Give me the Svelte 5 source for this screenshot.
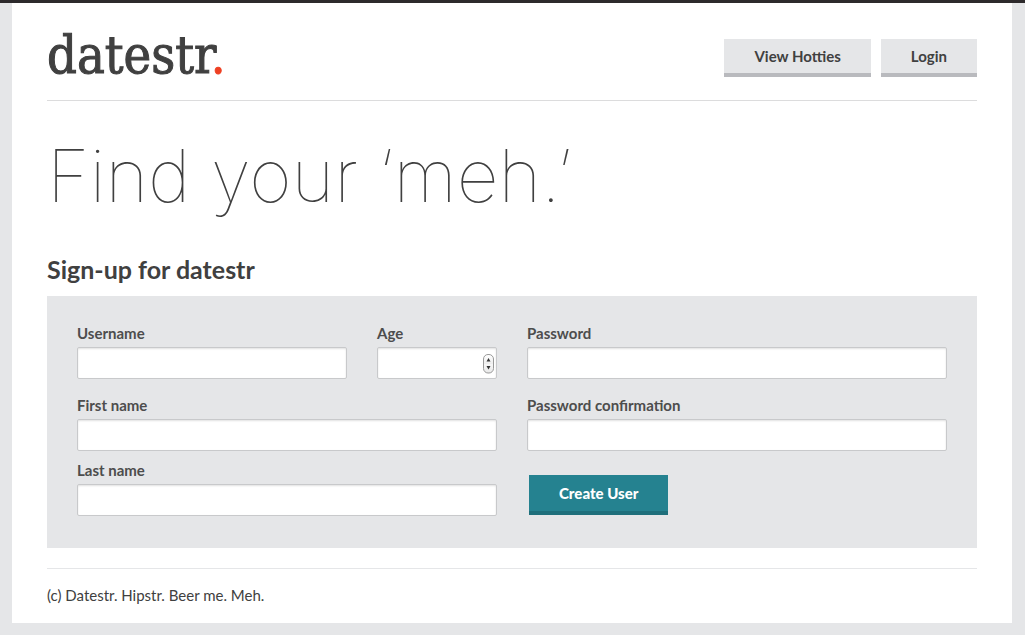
<script>
  let username = $state('');
  let age = $state(null);
  let firstName = $state('');
  let lastName = $state('');
  let password = $state('');
  let confirmation = $state('');

  function step(amount) {
    age = Math.max(0, (age ?? 0) + amount);
  }
</script>

<div class="page">
  <div class="sheet">
    <header>
      <a class="logo" href="#home">datestr<span class="dot">.</span></a>
      <nav>
        <a class="tab" href="#hotties">View Hotties</a>
        <a class="tab" href="#login">Login</a>
      </nav>
    </header>

    <main>
      <h1>Find your ‘meh.’</h1>
      <h2>Sign-up for datestr</h2>

      <form onsubmit={(event) => event.preventDefault()}>
        <div class="column">
          <div class="pair">
            <div class="field">
              <label for="username">Username</label>
              <input id="username" type="text" bind:value={username} />
            </div>
            <div class="field">
              <label for="age">Age</label>
              <div class="stepper">
                <input id="age" type="number" min="0" bind:value={age} />
                <svg class="spin" width="11" height="20" viewBox="0 0 11 20" aria-hidden="true">
                  <defs>
                    <linearGradient id="spin-fill" x1="0" y1="0" x2="0" y2="1">
                      <stop offset="0" stop-color="#fff" />
                      <stop offset="0.5" stop-color="#eee" />
                      <stop offset="0.5" stop-color="#f8f8f8" />
                      <stop offset="1" stop-color="#e8e8e8" />
                    </linearGradient>
                  </defs>
                  <rect x="0.5" y="0.5" width="10" height="18.5" rx="4.5" fill="url(#spin-fill)" stroke="#999" />
                  <path d="M5.5 4 L7.5 7.5 H3.5 Z" fill="#333" />
                  <path d="M5.5 15.5 L7.5 12 H3.5 Z" fill="#333" />
                  <rect width="11" height="10" fill="transparent" role="presentation" onclick={() => step(1)} />
                  <rect y="10" width="11" height="10" fill="transparent" role="presentation" onclick={() => step(-1)} />
                </svg>
              </div>
            </div>
          </div>
          <div class="field">
            <label for="first">First name</label>
            <input id="first" type="text" bind:value={firstName} />
          </div>
          <div class="field close">
            <label for="last">Last name</label>
            <input id="last" type="text" bind:value={lastName} />
          </div>
        </div>

        <div class="column">
          <div class="field">
            <label for="password">Password</label>
            <input id="password" type="password" bind:value={password} />
          </div>
          <div class="field">
            <label for="confirmation">Password confirmation</label>
            <input id="confirmation" type="password" bind:value={confirmation} />
          </div>
          <button type="submit">Create User</button>
        </div>
      </form>
    </main>

    <footer>(c) Datestr. Hipstr. Beer me. Meh.</footer>
  </div>
</div>

<style>
  :global(body) {
    background: #e5e6e8;
  }

  .page {
    box-sizing: border-box;
    padding: 0 13px 12px 12px;
    border-top: 3px solid #2d2a2c;
    background: #e5e6e8;
    color: #404040;
    font-family: Lato, 'Open Sans', sans-serif;
    font-size: 15px;
    line-height: 20px;
  }

  .sheet {
    box-sizing: border-box;
    max-width: 1000px;
    margin: 0 auto;
    padding: 0 35px 18px;
    background: #fff;
  }

  header {
    display: flex;
    justify-content: space-between;
    align-items: flex-start;
    padding: 20px 0 13px;
    border-bottom: 1px solid #dcdcdd;
  }

  .logo {
    color: #404040;
    font: 52px/64px 'DejaVu Serif Condensed', 'DejaVu Serif', serif;
    text-decoration: none;
    -webkit-text-stroke: 1px currentColor;
  }

  .dot {
    color: #ee4023;
  }

  nav {
    display: flex;
    gap: 10px;
    padding-top: 16px;
  }

  .tab {
    padding: 7px 30px;
    border-bottom: 4px solid #b9babe;
    background: #e5e6e8;
    color: #404040;
    font-weight: 700;
    text-decoration: none;
  }

  h1 {
    margin: 0;
    padding: 33px 0 37px;
    font-family: Inter, Lato, sans-serif;
    font-size: 73px;
    font-weight: 100;
    line-height: 84px;
  }

  h2 {
    margin: 0 0 12px;
    font-size: 25px;
    font-weight: 700;
    line-height: 29px;
  }

  form {
    display: grid;
    grid-template-columns: 1fr 1fr;
    gap: 30px;
    padding: 27px 30px 32px;
    background: #e5e6e8;
  }

  .column {
    display: flex;
    flex-direction: column;
    gap: 16px;
  }

  .pair {
    display: grid;
    grid-template-columns: 9fr 4fr;
    gap: 30px;
  }

  .field {
    display: flex;
    flex-direction: column;
    gap: 4px;
    min-width: 0;
  }

  .close {
    margin-top: -7px;
  }

  label {
    color: #4d4d4d;
    font-weight: 700;
  }

  input {
    box-sizing: border-box;
    width: 100%;
    height: 32px;
    margin: 0;
    padding: 4px 8px;
    border: 1px solid #c8c9cb;
    border-radius: 2px;
    background: #fff;
    box-shadow: inset 0 1px 2px rgba(0, 0, 0, 0.12);
    color: #404040;
    font: inherit;
  }

  input[type='number'] {
    appearance: textfield;
    padding-right: 18px;
  }

  .stepper {
    display: flex;
    position: relative;
  }

  .spin {
    position: absolute;
    top: 7px;
    right: 3px;
  }

  button {
    align-self: flex-start;
    margin: 8px 2px 0;
    padding: 8px 30px;
    border: 0;
    border-bottom: 4px solid #1f6f7b;
    background: #258290;
    color: #fff;
    font: inherit;
    font-weight: 900;
    cursor: pointer;
  }

  footer {
    margin-top: 20px;
    padding-top: 16px;
    border-top: 1px solid #e5e6e8;
  }
</style>
